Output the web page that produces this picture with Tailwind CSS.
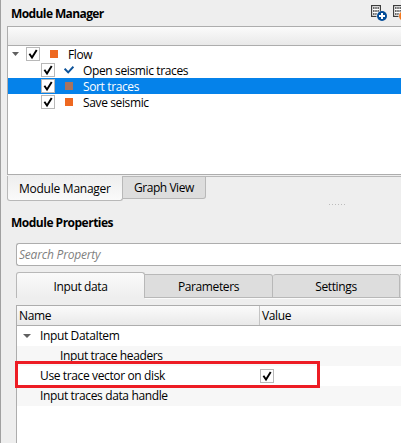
<!DOCTYPE html>
<html lang="en">
<head>
<meta charset="utf-8">
<title>Module Manager</title>
<script src="https://cdn.jsdelivr.net/npm/@tailwindcss/browser@4"></script>
</head>
<body class="w-[401px] h-[443px] overflow-hidden bg-[#eeeeee] text-black text-[12px] leading-4 tracking-[-0.37px] font-['Open_Sans','Noto_Sans',sans-serif] whitespace-nowrap">
<svg class="hidden">
  <symbol id="check" viewBox="0 0 14 14"><rect x=".5" y=".5" width="13" height="13" fill="#fff" stroke="#b8b8b8"/><path d="M3.4 6.8L6 10.6L10.7 3" fill="none" stroke="#000" stroke-width="1.9"/></symbol>
  <symbol id="module" viewBox="0 0 16 17"><rect x=".6" y=".6" width="8.8" height="10.8" fill="#fff" stroke="#3c3c3c" stroke-width="1.2"/><path d="M2 3h1.6m.6 0h1.6m.6 0h1.6M2 6h1.6m.6 0h1.6m.6 0h1.6M2 9h1.6m.6 0h1.6m.6 0h1.6" stroke="#3c3c3c" stroke-width="1.5"/></symbol>
</svg>
<div class="relative flex flex-col w-[401px] h-[443px] border-l border-[#a0a0a0] overflow-hidden">
  <header class="flex h-[26px] shrink-0 pl-[10px] pt-[6px]">
    <h1 class="font-bold text-[12px] tracking-[-0.6px] w-[360px] shrink-0">Module Manager</h1>
    <div class="flex shrink-0 -mt-[1px]">
      <svg class="w-[22px] h-[17px] shrink-0" viewBox="0 0 22 17"><use href="#module" width="16" height="17"/><circle cx="11" cy="11" r="5.6" fill="#eee"/><circle cx="11" cy="11" r="5" fill="#004b98"/><path d="M11 8v6M8 11h6" stroke="#fff" stroke-width="2"/></svg>
      <svg class="w-[16px] h-[17px] shrink-0" viewBox="0 0 16 17"><use href="#module" width="16" height="17"/><circle cx="11" cy="11" r="5.6" fill="#eee"/><circle cx="11" cy="11" r="5" fill="#f47920"/></svg>
    </div>
  </header>

  <section class="ml-[6px] h-[149px] shrink-0 bg-white border-l border-y border-[#adadad]">
    <div class="h-[19px] bg-gradient-to-b from-[#fbfbfb] to-[#e9e9e9] border-b border-[#adadad]"></div>
    <div class="flex items-center h-4 pl-[4px]">
      <svg class="w-[7px] h-1" viewBox="0 0 7 4"><path d="M0 0h7L3.5 4z" fill="#606060"/></svg>
      <svg class="w-[14px] h-[14px] ml-[7px]"><use href="#check"/></svg>
      <i class="w-2 h-2 ml-[10px] bg-[#ee6820]"></i><span class="ml-[10px] pt-[2px]">Flow</span>
    </div>
    <div class="flex items-center h-4 pl-[33px]">
      <svg class="w-[14px] h-[14px]"><use href="#check"/></svg>
      <svg class="w-[10px] h-2 ml-[9px]" viewBox="0 0 10 8"><path d="M.6 2.6L4.2 6.4L9.4.8" fill="none" stroke="#0c5299" stroke-width="2"/></svg><span class="ml-[9px] pt-[2px]">Open seismic traces</span>
    </div>
    <div class="flex items-center h-4 pl-[33px] bg-[#0582ea] text-white">
      <svg class="w-[14px] h-[14px]"><use href="#check"/></svg>
      <i class="w-2 h-2 ml-[10px] bg-[#a8735f]"></i><span class="ml-[10px] pt-[2px]">Sort traces</span>
    </div>
    <div class="flex items-center h-4 pl-[33px]">
      <svg class="w-[14px] h-[14px]"><use href="#check"/></svg>
      <i class="w-2 h-2 ml-[10px] bg-[#ee6820]"></i><span class="ml-[10px] pt-[2px]">Save seismic</span>
    </div>
  </section>

  <nav class="flex items-start ml-[6px] mt-[1px] h-[36px] shrink-0">
    <div class="w-[116px] h-[25px] pl-[11px] pt-[5px] border-x border-b border-[#b8b8b8] rounded-b-[3px] bg-gradient-to-b from-[#eeeeee] to-[#fafafa] tracking-[-0.25px]">Module Manager</div>
    <div class="w-[83px] h-[23px] pl-[11px] pt-[3px] border-t border-r border-b border-[#b8b8b8] rounded-br-[3px] bg-[#dddddd] tracking-[-0.45px]">Graph View</div>
    <div class="grow h-[36px] border-t border-[#b8b8b8]">
      <svg class="w-[17px] h-px ml-[123px] mt-[27px]"><path d="M0 .5h17" stroke="#bbb" stroke-dasharray="1 2"/></svg>
    </div>
  </nav>

  <h2 class="h-[31px] shrink-0 pl-[10px] pt-[3px] font-bold text-[12px] tracking-[-0.5px]">Module Properties</h2>
  <div class="ml-[15px] h-[23px] shrink-0 pl-[2px] pt-[3px] border-l border-y border-[#adadad] rounded-l-[3px] bg-white italic text-[#7f7f7f] tracking-[-0.2px]">Search Property</div>

  <nav class="flex items-end ml-[15px] mt-[6px] h-[26px] shrink-0">
    <div class="w-[129px] h-[26px] pt-[6px] text-center border-t border-x border-[#b8b8b8] rounded-t-[3px] bg-gradient-to-b from-[#fafafa] to-[#eeeeee]">Input data</div>
    <div class="w-[128px] h-6 pt-[4px] text-center border-t border-r border-b border-[#b8b8b8] rounded-tr-[3px] bg-[#dddddd]">Parameters</div>
    <div class="w-[127px] h-6 pt-[4px] text-center border-t border-r border-b border-[#b8b8b8] rounded-t-[3px] bg-[#dddddd]">Settings</div>
    <div class="grow h-6 border-y border-[#b8b8b8] bg-[#dddddd]"></div>
  </nav>
  <div class="h-px shrink-0 ml-[144px] bg-[#fafafa]"></div>

  <section class="ml-[15px] mt-[6px] grow bg-white border-l border-t border-[#adadad]">
    <div class="flex h-5 bg-gradient-to-b from-[#fbfbfb] to-[#e9e9e9] border-b border-[#adadad]">
      <div class="w-[243px] pl-[2px] pt-[2px] border-r border-[#c4c4c4]">Name</div>
      <div class="pl-[2px] pt-[2px]">Value</div>
    </div>
    <div class="flex items-center h-5 pl-[6px]"><svg class="w-2 h-1" viewBox="0 0 8 4"><path d="M0 0h8L4 4z" fill="#606060"/></svg><span class="ml-[9px]">Input DataItem</span></div>
    <div class="flex items-center h-5 pl-[43px] bg-[#f7f7f7]">Input trace headers</div>
    <div class="flex items-center h-5 pl-[23px]"><span class="w-[220px]">Use trace vector on disk</span><svg class="w-[14px] h-[14px]"><use href="#check"/></svg></div>
    <div class="flex items-center h-5 pl-[23px] bg-[#f7f7f7]">Input traces data handle</div>
  </section>
  <div class="absolute left-[14px] top-[361px] w-[305px] h-[27px] border-[3px] border-[#ed1c24]"></div>
</div>
</body>
</html>
